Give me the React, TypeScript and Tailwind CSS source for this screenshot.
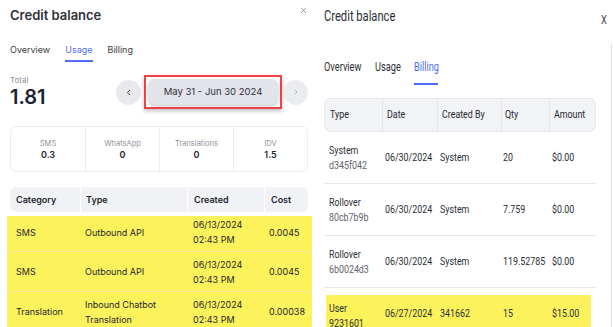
import { ChevronLeft, ChevronRight, X } from 'lucide-react';
import type { ReactNode } from 'react';

const usageRows = [
  { category: 'SMS', type: ['Outbound API'], created: ['06/13/2024', '02:43 PM'], cost: '0.0045' },
  { category: 'SMS', type: ['Outbound API'], created: ['06/13/2024', '02:43 PM'], cost: '0.0045' },
  { category: 'Translation', type: ['Inbound Chatbot', 'Translation'], created: ['06/13/2024', '02:43 PM'], cost: '0.00038' },
];

const billingRows = [
  { type: 'System', id: 'd345f042', date: '06/30/2024', by: 'System', qty: '20', amount: '$0.00' },
  { type: 'Rollover', id: '80cb7b9b', date: '06/30/2024', by: 'System', qty: '7.759', amount: '$0.00' },
  { type: 'Rollover', id: '6b0024d3', date: '06/30/2024', by: 'System', qty: '119.52785', amount: '$0.00' },
];

const stats = [
  { label: 'SMS', value: '0.3' },
  { label: 'WhatsApp', value: '0' },
  { label: 'Translations', value: '0' },
  { label: 'IDV', value: '1.5' },
];

// narrow text for the right-hand screenshot (no condensed font installed)
function N({ children, className = '' }: { children: ReactNode; className?: string }) {
  return <span className={`inline-block origin-left scale-x-[0.77] whitespace-nowrap ${className}`}>{children}</span>;
}

function UsagePanel() {
  return (
    <div className="w-[313px] shrink-0 h-full bg-white font-['Inter',sans-serif] pl-[10px] pr-[5px]">
      <div className="flex items-start justify-between pt-[5px]">
        <h1 className="text-[13px] leading-[20px] font-semibold text-[#2f3237]">Credit balance</h1>
        <X className="w-[9px] h-[9px] mt-[1px] text-[#555]" strokeWidth={1.5} />
      </div>

      {/* Tabs */}
      <div className="flex gap-[15px] mt-[19px] text-[9px] leading-[12px] text-[#3a3d42]">
        <span className="pb-[5px]">Overview</span>
        <span className="pb-[4px] text-[#4f6ef7] border-b-2 border-[#4f6ef7]">Usage</span>
        <span className="pb-[5px]">Billing</span>
      </div>

      {/* Total + date nav */}
      <div className="flex items-start justify-between mt-[13px]">
        <div>
          <div className="text-[8px] leading-[10px] text-[#8a8f98]">Total</div>
          <div className="text-[20px] leading-[24px] font-semibold text-[#1c2233]">1.81</div>
        </div>
        <div className="flex items-center">
          <div className="w-[25px] h-[25px] rounded-full bg-[#e8e9ed] flex items-center justify-center">
            <ChevronLeft className="w-[9px] h-[9px] text-[#333]" strokeWidth={2.5} />
          </div>
          <div className="ml-[3px] border-2 border-[#f0404a] p-[2px] shadow-[0_2px_4px_rgba(0,0,0,0.25)]">
            <div className="w-[130px] h-[26px] rounded-[7px] bg-[#e3e4e9] shadow-[0_1px_3px_rgba(0,0,0,0.25)] flex items-center justify-center text-[9.5px] text-[#2a3040]">
              May 31 - Jun 30 2024
            </div>
          </div>
          <div className="ml-[1px] w-[25px] h-[25px] rounded-full bg-[#ebecf0] flex items-center justify-center">
            <ChevronRight className="w-[8px] h-[8px] text-[#999]" strokeWidth={2} />
          </div>
        </div>
      </div>

      {/* Stats */}
      <div className="grid grid-cols-4 w-[298px] h-[46px] mt-[17px] border border-[#eceef1] rounded-[6px]">
        {stats.map((s, i) => (
          <div key={s.label} className={`flex flex-col items-center justify-center ${i > 0 ? 'border-l border-[#eceef1]' : ''}`}>
            <span className="text-[7.5px] leading-[11px] text-[#8e939b]">{s.label}</span>
            <span className="text-[9px] leading-[12px] font-semibold text-[#1f2533]">{s.value}</span>
          </div>
        ))}
      </div>

      {/* Table */}
      <div className="w-[298px] mt-[15px] text-[9px] text-[#23262d]">
        <div className="grid grid-cols-[70px_107px_77px_1fr] h-[25px] rounded-[6px] bg-[#f1f2f5] font-semibold">
          <div className="flex items-center pl-[6px]">Category</div>
          <div className="flex items-center pl-[5px] border-l border-white">Type</div>
          <div className="flex items-center pl-[6px] border-l border-white">Created</div>
          <div className="flex items-center pl-[6px] border-l border-white">Cost</div>
        </div>
        <div className="mt-[4px] -ml-[3px] w-[305px] bg-[#fcf35c]">
          {usageRows.map((r, i) => (
            <div
              key={i}
              className={`grid grid-cols-[73px_107px_77px_1fr] border-b border-[#f3ed98] leading-[15px] items-center ${i === 0 ? 'h-[36px] pb-[3px]' : 'h-[40px]'}`}
            >
              <div className="pl-[9px]">{r.category}</div>
              <div className="pl-[5px]">{r.type.map(t => <div key={t}>{t}</div>)}</div>
              <div className="pl-[6px]">{r.created.map(t => <div key={t}>{t}</div>)}</div>
              <div className="pl-[5px]">{r.cost}</div>
            </div>
          ))}
        </div>
      </div>
    </div>
  );
}

function BillingPanel() {
  const cols = 'grid grid-cols-[57px_55px_64px_48px_1fr]';
  return (
    <div className="relative flex-1 h-full bg-white pl-[11px] font-['Roboto',sans-serif] text-[#2b2e33]">
      <div className="flex items-start justify-between pt-[8px] pr-[4px]">
        <h1 className="text-[14.5px] leading-[18px]"><N>Credit balance</N></h1>
        <span className="text-[12px] leading-[12px] mt-[6px] text-[#444]"><N>X</N></span>
      </div>
      <div className="absolute right-[1px] top-[43px] bottom-0 w-px bg-[#e3e4e7]" />

      {/* Tabs */}
      <div className="flex gap-[15px] mt-[34px] text-[12px] leading-[15px]">
        <span className="w-[36px] pb-[10px]"><N>Overview</N></span>
        <span className="w-[24px] pb-[10px]"><N>Usage</N></span>
        <span className="w-[24px] pb-[8px] text-[#4f6ef7] border-b-2 border-[#4f6ef7]"><N>Billing</N></span>
      </div>

      {/* Table */}
      <div className="w-[272px] mt-[13px] text-[11.5px]">
        <div className={`${cols} h-[34px] rounded-[6px] bg-[#f2f3f6] border border-[#e8e9ec] text-[#25282d]`}>
          <div className="flex items-center pl-[5px]"><N>Type</N></div>
          <div className="flex items-center pl-[4px] border-l border-[#e4e5e9]"><N>Date</N></div>
          <div className="flex items-center pl-[4px] border-l border-[#e4e5e9]"><N>Created By</N></div>
          <div className="flex items-center pl-[3px] border-l border-[#e4e5e9]"><N>Qty</N></div>
          <div className="flex items-center pl-[4px] border-l border-[#e4e5e9]"><N>Amount</N></div>
        </div>
        {billingRows.map((r, i) => (
          <div key={i} className={`${cols} h-[52px] items-center border-b border-[#e6e7ea] leading-[15px]`}>
            <div className="pl-[5px]">
              <div><N>{r.type}</N></div>
              <div className="text-[#60646b]"><N>{r.id}</N></div>
            </div>
            <div className="pl-[4px]"><N>{r.date}</N></div>
            <div className="pl-[4px]"><N>{r.by}</N></div>
            <div className="pl-[3px]"><N>{r.qty}</N></div>
            <div className="pl-[4px]"><N>{r.amount}</N></div>
          </div>
        ))}
        <div className="mt-[7px] ml-[2px] w-[265px] h-[36px] bg-[#fcf35c] grid grid-cols-[55px_55px_64px_48px_1fr] items-center leading-[15px]">
          <div className="pl-[3px] pt-[6px]">
            <div><N>User</N></div>
            <div><N>9231601</N></div>
          </div>
          <div className="pl-[4px]"><N>06/27/2024</N></div>
          <div className="pl-[4px]"><N>341662</N></div>
          <div className="pl-[3px]"><N>15</N></div>
          <div className="pl-[4px]"><N>$15.00</N></div>
        </div>
      </div>
    </div>
  );
}

export default function App() {
  return (
    <div className="flex w-[613px] h-[327px] overflow-hidden bg-white">
      <UsagePanel />
      <BillingPanel />
    </div>
  );
}
